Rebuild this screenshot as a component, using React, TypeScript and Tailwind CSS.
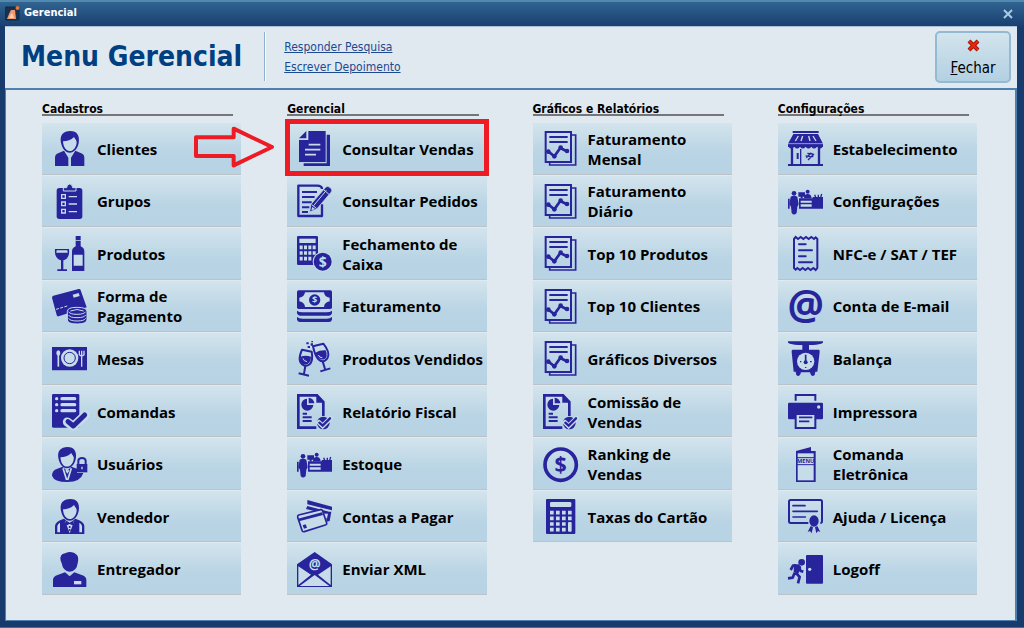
import type { ReactNode } from "react"
import { clsx } from "clsx"

const INK = "#28249c"
const PALE = "#c6dce8"

function Glyph({ children }: { children: ReactNode }) {
  return (
    <svg viewBox="0 0 105 105" className="h-[35px] w-[35px] shrink-0 overflow-visible" fill={INK} aria-hidden="true">
      {children}
    </svg>
  )
}

function Dollar({ x, y, size, color }: { x: number; y: number; size: number; color: string }) {
  return (
    <text x={x} y={y} fontSize={size} fontWeight="700" fontFamily="Open Sans, sans-serif" textAnchor="middle" fill={color}>
      $
    </text>
  )
}

function Head() {
  return (
    <>
      <path d="M27 36C22 12 34 0 55 0c20 0 29 14 25 36-3 17-14 29-27 29S31 53 27 36Z" />
      <path d="M33 31c12 0 25-4 33-13 3 6 6 8 8 14 0 16-10 28-21 28S34 48 33 31Z" fill={PALE} />
    </>
  )
}

function ReportIcon() {
  return (
    <Glyph>
      <g fill="none" stroke={INK} strokeWidth="6">
        <path d="M8 3h76v90H8Z" />
        <path d="M84 12h14v90H20v-9" strokeWidth="5" />
        <path d="M19 18h55M19 33h55" />
        <path d="M17 62l17 14 18-25 18 9" strokeWidth="8" />
      </g>
      <circle cx="16" cy="62" r="7" />
      <circle cx="34" cy="76" r="7" />
      <circle cx="53" cy="50" r="7" />
      <circle cx="72" cy="60" r="7" />
    </Glyph>
  )
}

function AuditIcon() {
  return (
    <Glyph>
      <path d="M58 101H4V4h56l19 20v42" fill="none" stroke={INK} strokeWidth="8" />
      <path d="M58 2l22 24H58Z" />
      <path d="M30 14v19h19a18 18 0 1 1-19-19Z" />
      <path d="M35 11a18 18 0 0 1 17 17H35Z" />
      <path d="M17 59h13M17 70h27M17 81h27" stroke={INK} strokeWidth="6" />
      <circle cx="79" cy="87" r="19" />
      <path d="M66 85l11 11 24-24" fill="none" stroke={PALE} strokeWidth="14" strokeLinecap="round" />
      <path d="M67 86l10 9 22-22" fill="none" stroke={INK} strokeWidth="7" strokeLinecap="round" />
    </Glyph>
  )
}

function CounterIcon() {
  return (
    <Glyph>
      <circle cx="18" cy="28" r="7" />
      <path d="M8 38q10-5 20 0l4 23-4 7-2 19q-8 9-15 0L9 68l-5-7Z" />
      <path d="M0 44h5v30H0ZM33 43h72v31H33Z" />
      <path d="M38 50h33v6H38ZM38 61h33v7H38Z" fill={PALE} />
      <path d="M31 25h20v13H31ZM38 38h6v5h-6Z" />
      <circle cx="59" cy="23" r="6" />
      <path d="M48 43q0-13 11-13t12 13ZM74 39h31v7H74Z" />
      <path d="M83 40l-3-8M91 40v-8M98 40l3-10" stroke={INK} strokeWidth="4" />
    </Glyph>
  )
}

const icons: Record<string, ReactNode> = {
  client: (
    <Glyph>
      <Head />
      <path d="M9 105V80q0-10 11-14l16-7 13 21v25ZM97 105V80q0-10-11-14l-16-7-13 21v25Z" />
    </Glyph>
  ),
  clipboard: (
    <Glyph>
      <rect x="14" y="12" width="77" height="93" rx="8" />
      <path d="M34 21v-10h10q1-11 9-11t9 11h10v10Z" stroke={PALE} strokeWidth="3" />
      <path d="M29 32h11v11H29ZM29 54h11v11H29ZM29 76h11v11H29ZM50 38h25M50 60h25M50 83h25" fill="none" stroke={PALE} strokeWidth="4" />
    </Glyph>
  ),
  wine: (
    <Glyph>
      <path d="M9 39h42q3 29-17 34v27h11v5H16v-5h11V73Q6 67 9 39Z" />
      <path d="M14 43h32l1 7H13Z" fill={PALE} />
      <path d="M71 0h15v31q11 5 11 15v59H60V46q0-10 11-15Z" />
      <path d="M65 56h27v33H65ZM70 12h17v2H70Z" fill={PALE} />
    </Glyph>
  ),
  payment: (
    <Glyph>
      <path d="M4 20L80 0q5-1 6 4l18 51-84 27q-5 1-6-4L0 26q0-5 4-6Z" />
      <path d="M62 17l18-5 3 9-18 5Z" fill={PALE} />
      <path d="M12 61l34-10" stroke={PALE} strokeWidth="3" strokeDasharray="9 4" />
      <path d="M46 67q0-12 29-12t30 12v26q-2 12-30 12T46 93Z" stroke={PALE} strokeWidth="3" />
      <path d="M50 68q3 8 25 8t26-8M50 78q3 8 25 8t26-8M50 88q3 8 25 8t26-8M55 66q20-9 40 0" fill="none" stroke={PALE} strokeWidth="3" />
    </Glyph>
  ),
  table: (
    <Glyph>
      <path d="M0 18h105v70H0Z" />
      <circle cx="53" cy="51" r="26" fill={PALE} />
      <circle cx="53" cy="51" r="17" fill="none" stroke={INK} strokeWidth="3" />
      <path d="M19 42v35" stroke={PALE} strokeWidth="5" />
      <ellipse cx="19" cy="36" rx="6" ry="8" fill={PALE} />
      <path d="M89 29v48M82 29v12q7 7 14 0V29" fill="none" stroke={PALE} strokeWidth="4" />
    </Glyph>
  ),
  order: (
    <Glyph>
      <rect width="82" height="101" rx="4" />
      <g fill={PALE}>
        <circle cx="14" cy="14" r="5" />
        <circle cx="14" cy="32" r="5" />
        <circle cx="14" cy="50" r="5" />
      </g>
      <path d="M30 14h38M30 32h38M30 50h38" stroke={PALE} strokeWidth="10" strokeLinecap="round" />
      <path d="M46 84l18 13 37-35" fill="none" stroke={PALE} strokeWidth="27" strokeLinejoin="round" strokeLinecap="round" />
      <path d="M48 83l16 13 34-33" fill="none" stroke={INK} strokeWidth="15" strokeLinejoin="round" strokeLinecap="round" />
    </Glyph>
  ),
  user: (
    <Glyph>
      <g transform="translate(-7 0) scale(.98)">
        <Head />
      </g>
      <path d="M0 86q0-16 16-21l16-6 13 13 13-13 17 6v13h19Q86 105 46 105 6 105 0 86Z" />
      <path d="M33 64l11 35M58 64L47 99M42 70l4 6 4-6" fill="none" stroke={PALE} strokeWidth="5" />
      <path d="M74 51h32v25H74Z" />
      <path d="M79 51V41q1-8 11-8t11 8v10" fill="none" stroke={INK} strokeWidth="6" />
      <path d="M90 59v8" stroke={PALE} strokeWidth="4" />
    </Glyph>
  ),
  waiter: (
    <Glyph>
      <Head />
      <path d="M36 59Q9 67 9 81v24h88V81q0-14-27-22L53 73Z" />
      <path d="M16 100V81q2-7 8-10v29ZM90 100V81q-2-7-8-10v29Z" fill={PALE} />
      <path d="M39 65l14 38 14-38-14 8Z" fill={PALE} />
      <path d="M41 65l12 6 12-6v15l-12-5-12 5Z" />
      <circle cx="53" cy="84" r="3" />
      <circle cx="53" cy="93" r="3" />
    </Glyph>
  ),
  courier: (
    <Glyph>
      <path d="M26 26Q22 6 39 4 61-6 75 9q6 7 2 25-3 24-24 25-20-1-24-25Z" />
      <path d="M3 105V84q0-11 14-15l22-8 14 12 14-12 22 8q14 4 14 15v21Z" />
      <path d="M66 87h22v10H66Z" fill={PALE} />
    </Glyph>
  ),
  docs: (
    <Glyph>
      <path d="M89 11h10v94H20v-8h69Z" />
      <path d="M34 0h52v93H6V27h28ZM6 22L28 0v22Z" />
      <path d="M35 41h35M24 56h46M24 71h33" stroke={PALE} strokeWidth="5" />
    </Glyph>
  ),
  edit: (
    <Glyph>
      <path d="M60 5H4v91h71V61" fill="none" stroke={INK} strokeWidth="7" strokeLinejoin="round" />
      <path d="M60 5q15 0 15 10" fill="none" stroke={INK} strokeWidth="7" />
      <path d="M15 24h45M15 39h38M15 55h29M15 70h22M15 84h18" stroke={INK} strokeWidth="6" />
      <path d="M38 84l4-23L86 10q5-6 14 1 8 7 2 14L60 74Z" stroke={PALE} strokeWidth="2" />
      <path d="M44 62l14 11M81 18l16 14M50 65l38-46" fill="none" stroke={PALE} strokeWidth="3" />
      <path d="M43 79l3-10 8 6Z" fill={PALE} />
    </Glyph>
  ),
  cashier: (
    <Glyph>
      <rect width="63" height="87" rx="4" />
      <path d="M7 8h49v13H7Z" fill={PALE} />
      <path d="M8 34h48M8 51h48M8 68h36" stroke={PALE} strokeWidth="11" strokeDasharray="9 4" />
      <circle cx="77" cy="77" r="30" fill={PALE} />
      <circle cx="77" cy="77" r="27" />
      <Dollar x={77} y={92} size={42} color={PALE} />
    </Glyph>
  ),
  money: (
    <Glyph>
      <rect y="4" width="105" height="56" rx="5" />
      <path d="M24 10h57q1 15 17 16v11Q82 40 81 54H24Q23 40 7 37V26q15-1 17-16Z" fill={PALE} />
      <circle cx="53" cy="33" r="17" />
      <Dollar x={53} y={43} size={28} color={PALE} />
      <path d="M0 65q6 5 16 5h73q10 0 16-5v8q-2 7-9 7H9q-7 0-9-7ZM0 84q6 5 16 5h73q10 0 16-5v8q-2 7-9 7H9q-7 0-9-7Z" />
    </Glyph>
  ),
  toast: (
    <Glyph>
      <g fill="none" stroke={INK} strokeWidth="6" strokeLinejoin="round">
        <path d="M15 26l29 6q5 27-6 38-9 7-18 3Q-1 62 15 26Z" />
        <path d="M25 75l-4 23M5 97l31 7" />
        <path d="M48 16l31-8q21 26 13 42-6 10-16 11-19-2-28-45Z" />
        <path d="M77 61l8 26M70 91l30-9" />
      </g>
      <path d="M11 47q14-5 31 0 0 22-18 24Q7 68 11 47ZM55 35q13-8 31-7 8 19-4 27-18 4-27-20Z" />
      <path d="M18 52q2 9 12 10M64 42q4 9 12 8" fill="none" stroke={PALE} strokeWidth="3" />
      <path d="M28 4h7v6h-7ZM41 7h7v7h-7ZM32 15h7v6h-7ZM43 0h5v4h-5Z" />
    </Glyph>
  ),
  audit: <AuditIcon />,
  counter: <CounterIcon />,
  cards: (
    <Glyph>
      <path d="M31 3l74 20v11L31 16ZM27 30l4-9 65 17h7l-5 28-10 2v-23Z" />
      <path d="M85 44h8l-3 14h-6Z" fill={PALE} />
      <path d="M5 48l66-16q5-1 6 4l12 36q1 5-4 6L22 98q-6 1-7-4L2 55q-1-5 3-7Z" fill={PALE} stroke={INK} strokeWidth="5" />
      <path d="M3 59l72-19 3 8L6 67Z" />
      <path d="M17 79l9-3 4 10-9 3Z" />
    </Glyph>
  ),
  mail: (
    <Glyph>
      <path d="M0 37L53 0l52 37v68H0Z" />
      <path d="M4 43l38 25L4 99ZM101 43L63 68l38 31ZM8 102l45-33 44 33Z" fill={PALE} />
      <text x="53" y="50" fontSize="40" fontFamily="Open Sans, sans-serif" textAnchor="middle" fill={PALE}>@</text>
    </Glyph>
  ),
  report: <ReportIcon />,
  coin: (
    <Glyph>
      <circle cx="53" cy="53" r="47" fill="none" stroke={INK} strokeWidth="11" />
      <Dollar x={53} y={76} size={64} color={INK} />
    </Glyph>
  ),
  calculator: (
    <Glyph>
      <rect x="9" width="88" height="105" rx="3" />
      <rect x="21" y="9" width="64" height="15" rx="4" fill={PALE} />
      <g stroke={PALE} strokeWidth="11" strokeDasharray="11 7">
        <path d="M21 41h66M21 58h66M21 75h47M21 92h47" />
      </g>
      <rect x="75" y="69" width="11" height="29" rx="3" fill={PALE} />
    </Glyph>
  ),
  store: (
    <Glyph>
      <path d="M14 0h78v6H14ZM16 9h74l15 29v10H0V38Z" />
      <path d="M31 15l-9 15M44 15l-5 15M62 15l4 15M75 15l9 15" stroke={PALE} strokeWidth="4" />
      <path d="M0 38h105" stroke={PALE} strokeWidth="2" />
      <path d="M2 47q7 11 17 0 8 11 17 0 8 11 17 0 8 11 17 0 8 11 17 0 8 11 17 0Z" />
      <path d="M12 51v50M93 51v50" stroke={INK} strokeWidth="7" />
      <path d="M38 54v47" stroke={INK} strokeWidth="4" />
      <path d="M0 99h105v6H0ZM26 66h6v18h-6Z" />
      <path d="M55 80l15-15M60 87l18-18M53 75l23 2M58 67l17 2" stroke={INK} strokeWidth="4" />
    </Glyph>
  ),
  receipt: (
    <Glyph>
      <path d="M18 9l5-6 7 6 8-6 8 6 8-6 8 6 8-6 8 6 5-5 5 5v87l-5 6-7-6-8 6-8-6-8 6-8-6-8 6-8-6-5 5-5-5Z" fill="none" stroke={INK} strokeWidth="6" />
      <path d="M33 25h20M33 43h39M33 61h20M33 79h39" stroke={INK} strokeWidth="6" strokeLinecap="round" />
    </Glyph>
  ),
  at: (
    <Glyph>
      <text x="53" y="92" fontSize="122" fontWeight="700" fontFamily="Open Sans, sans-serif" textAnchor="middle">@</text>
    </Glyph>
  ),
  scale: (
    <Glyph>
      <path d="M0 1h105v4q-10 6-30 7H63v14h29q4 0 3 7l-7 59h-6l-2 10q-8 7-12-2l-2-6H39l-2 6q-5 9-12 2l-2-10h-6L11 33q-1-7 3-7h29V12H30Q10 11 0 5Z" />
      <circle cx="53" cy="61" r="26" fill={PALE} />
      <path d="M53 41v21" stroke={INK} strokeWidth="5" />
      <circle cx="53" cy="64" r="6" />
      <path d="M36 62h4M66 62h5M53 78v3" stroke={INK} strokeWidth="4" />
    </Glyph>
  ),
  printer: (
    <Glyph>
      <path d="M23 20V3h59v17" fill="none" stroke={INK} strokeWidth="6" />
      <rect y="26" width="105" height="50" rx="4" />
      <circle cx="92" cy="39" r="5" fill={PALE} />
      <path d="M23 60h59v42H23Z" fill={PALE} stroke={INK} strokeWidth="6" />
      <path d="M33 70h40M33 82h31" stroke={INK} strokeWidth="5" />
    </Glyph>
  ),
  menu: (
    <Glyph>
      <path d="M24 12L69 0v12h14v93H24Z" />
      <path d="M29 19h48v81H29Z" fill={PALE} />
      <path d="M27 32h52M27 53h52" stroke={INK} strokeWidth="3" />
      <text x="53" y="49" fontSize="17" fontWeight="700" fontFamily="Open Sans, sans-serif" textAnchor="middle">MENU</text>
    </Glyph>
  ),
  license: (
    <Glyph>
      <path d="M61 72H8q-5 0-5-5V8q0-5 5-5h89q5 0 5 5v59q0 5-5 5" fill="none" stroke={INK} strokeWidth="6" />
      <path d="M15 20h36M15 37h73M15 54h37" stroke={INK} strokeWidth="5" strokeLinecap="round" />
      <ellipse cx="78" cy="66" rx="14" ry="17" />
      <path d="M68 81l7 4-4 18-5-7-7 3ZM88 81l-7 4 4 18 5-7 7 3Z" />
    </Glyph>
  ),
  exit: (
    <Glyph>
      <rect x="54" y="9" width="51" height="86" rx="3" />
      <circle cx="65" cy="52" r="5" fill={PALE} />
      <circle cx="41" cy="31" r="10" />
      <path d="M18 37h14l8 8-10 22-13-6Z" />
      <path d="M24 40l-9 1-7 13M33 45l5 12 8 2M20 62l-6 15-14 2M23 62l12 13-5 19" fill="none" stroke={INK} strokeWidth="8" strokeLinejoin="round" />
    </Glyph>
  ),
}

type Item = { label: string; icon: string; marked?: boolean }

const columns: { title: string; items: Item[] }[] = [
  {
    title: "Cadastros",
    items: [
      { label: "Clientes", icon: "client" },
      { label: "Grupos", icon: "clipboard" },
      { label: "Produtos", icon: "wine" },
      { label: "Forma de\nPagamento", icon: "payment" },
      { label: "Mesas", icon: "table" },
      { label: "Comandas", icon: "order" },
      { label: "Usuários", icon: "user" },
      { label: "Vendedor", icon: "waiter" },
      { label: "Entregador", icon: "courier" },
    ],
  },
  {
    title: "Gerencial",
    items: [
      { label: "Consultar Vendas", icon: "docs", marked: true },
      { label: "Consultar Pedidos", icon: "edit" },
      { label: "Fechamento de\nCaixa", icon: "cashier" },
      { label: "Faturamento", icon: "money" },
      { label: "Produtos Vendidos", icon: "toast" },
      { label: "Relatório Fiscal", icon: "audit" },
      { label: "Estoque", icon: "counter" },
      { label: "Contas a Pagar", icon: "cards" },
      { label: "Enviar XML", icon: "mail" },
    ],
  },
  {
    title: "Gráficos e Relatórios",
    items: [
      { label: "Faturamento\nMensal", icon: "report" },
      { label: "Faturamento\nDiário", icon: "report" },
      { label: "Top 10 Produtos", icon: "report" },
      { label: "Top 10 Clientes", icon: "report" },
      { label: "Gráficos Diversos", icon: "report" },
      { label: "Comissão de\nVendas", icon: "audit" },
      { label: "Ranking de\nVendas", icon: "coin" },
      { label: "Taxas do Cartão", icon: "calculator" },
    ],
  },
  {
    title: "Configurações",
    items: [
      { label: "Estabelecimento", icon: "store" },
      { label: "Configurações", icon: "counter" },
      { label: "NFC-e / SAT / TEF", icon: "receipt" },
      { label: "Conta de E-mail", icon: "at" },
      { label: "Balança", icon: "scale" },
      { label: "Impressora", icon: "printer" },
      { label: "Comanda\nEletrônica", icon: "menu" },
      { label: "Ajuda / Licença", icon: "license" },
      { label: "Logoff", icon: "exit" },
    ],
  },
]

function Callout() {
  return (
    <div className="pointer-events-none absolute -inset-x-[2px] -top-1 bottom-0 border-[5px] border-[#ed1c24]">
      <svg viewBox="0 0 240 126" className="absolute right-full top-[2px] mr-4 h-[42px] w-[80px]" aria-hidden="true">
        <path d="M6 34h113V8l115 55-115 55V90H6Z" fill="none" stroke="#ed1c24" strokeWidth="12" strokeLinejoin="round" />
      </svg>
    </div>
  )
}

function MenuButton({ label, icon, marked }: Item) {
  return (
    <li className="relative flex pb-px">
      <button
        type="button"
        className={clsx(
          "flex w-full items-center gap-[10px] border-b border-b-[#bcc2c7] pt-px pl-[10px]",
          "bg-gradient-to-b from-[#d3e4ed] via-[#b9d4e4] via-60% to-[#b7d3e4]",
          "text-left text-[15px] leading-5 font-bold whitespace-pre text-black"
        )}
      >
        {icons[icon]}
        <span>{label}</span>
      </button>
      {marked && <Callout />}
    </li>
  )
}

export default function App() {
  return (
    <div className="flex min-h-screen flex-col border-b border-[#3b6f9f] bg-[#173b6d] pr-[7px] pb-[6px] pl-[5px] font-['Open_Sans','Noto_Sans',sans-serif]">
      <div className="-mr-[7px] -ml-[5px] flex h-[26px] items-center border-t-2 border-[#5289af] bg-gradient-to-b from-[#316491] to-[#193f70] pr-[10px] pb-px pl-[5px] font-['DejaVu_Sans_Condensed','DejaVu_Sans',sans-serif]">
        <svg viewBox="0 0 15 15" className="h-[15px] w-[15px]" aria-hidden="true">
          <rect y="1" width="14" height="13" rx="1" fill="#173150" stroke="#102b45" />
          <path d="M2 13l2-5 2-4h4l1 9Z" fill="#ef9a72" />
          <path d="M4 12l3-5 2 5Z" fill="#ffd0b0" />
          <circle cx="12.5" cy="2" r="2" fill="#e87835" />
        </svg>
        <span className="ml-1 flex-1 text-[11px] font-bold text-white">Gerencial</span>
        <button type="button" aria-label="Fechar janela" className="p-px">
          <svg viewBox="0 0 10 10" className="h-[10px] w-[10px]" aria-hidden="true">
            <path d="M1 1l8 8M9 1L1 9" stroke="#a9cbe4" strokeWidth="2" />
          </svg>
        </button>
      </div>

      <header className="flex h-[62px] items-center border-t border-[#a9bfd3] bg-[#e1e9f0] pr-[6px] pb-[2px] pl-4 font-['DejaVu_Sans_Condensed','DejaVu_Sans',sans-serif]">
        <h1 className="text-[28px] leading-8 font-bold text-[#003f82]">Menu Gerencial</h1>
        <div className="ml-[22px] h-[49px] w-[2px] border-r border-l border-r-white border-l-[#8eafcb]" />
        <nav className="ml-[18px] flex flex-col gap-1 text-[12px] leading-4 text-[#1c4a91]">
          <a href="#pesquisa" className="underline">Responder Pesquisa</a>
          <a href="#depoimento" className="underline">Escrever Depoimento</a>
        </nav>
        <button
          type="button"
          className="ml-auto flex h-[52px] w-[76px] flex-col items-center rounded-[5px] border-2 border-[#94b9d3] bg-gradient-to-b from-[#d3e4ed] to-[#b3d0e2] pt-[6px]"
        >
          <svg viewBox="0 0 13 13" className="h-[13px] w-[13px]" aria-hidden="true">
            <path d="M2 2l9 9M11 2l-9 9" stroke="#9c1708" strokeWidth="4" />
            <path d="M2 2l9 9M11 2l-9 9" stroke="#e8270c" strokeWidth="2.4" />
          </svg>
          <span className="mt-1 text-[15px] leading-6 text-black"><u>F</u>echar</span>
        </button>
      </header>

      <main className="grid flex-1 grid-cols-4 gap-x-[46px] border-t-2 border-r-2 border-b border-l border-[#4f81b0] bg-[#e1e9f0] pt-[11px] pr-[38px] pb-6 pl-[36px]">
        {columns.map((column) => (
          <section key={column.title} className="flex flex-col">
            <h2 className="mr-2 h-[15px] border-b-2 border-[#747679] font-['DejaVu_Sans_Condensed','DejaVu_Sans',sans-serif] text-[12px] leading-4 font-bold text-black">
              {column.title}
            </h2>
            <ul className="mt-[7px] grid flex-1 grid-rows-[repeat(9,minmax(52px,1fr))]">
              {column.items.map((item) => (
                <MenuButton key={item.label} {...item} />
              ))}
            </ul>
          </section>
        ))}
      </main>
    </div>
  )
}
